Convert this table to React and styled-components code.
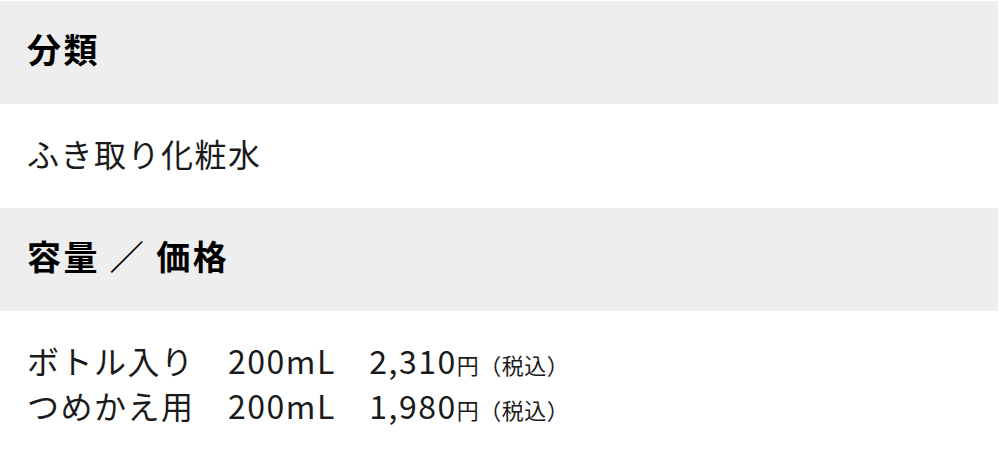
import React from "react";
import styled, { createGlobalStyle } from "styled-components";

const GlobalStyle = createGlobalStyle`
  html, body { margin: 0; padding: 0; background: #ffffff; }
  body {
    font-family: "Noto Sans CJK JP", "Noto Sans", sans-serif;
    color: #1a1a1a;
  }
`;

const Spec = styled.dl`
  margin: 0;
  padding: 1px 0 0 0;
  width: 998px;
`;

const Term = styled.dt`
  display: flex;
  align-items: center;
  height: 103px;
  padding: 0 27px 9px;
  box-sizing: border-box;
  background: #eeeeee;
  font-size: 34px;
  font-weight: 700;
  letter-spacing: 0.07em;
  color: #000000;
  white-space: pre;
`;

const Detail = styled.dd`
  margin: 0;
  padding: ${(p) => (p.$stacked ? "29px 27px 40px" : "0 27px 6px")};
  min-height: ${(p) => (p.$stacked ? "auto" : "104px")};
  box-sizing: border-box;
  display: flex;
  flex-direction: column;
  justify-content: center;
  font-size: 32px;
  font-weight: 400;
  letter-spacing: 1.5px;
  line-height: 41px;
  color: #1a1a1a;
`;

const Line = styled.div`
  white-space: pre;
`;

const Unit = styled.span`
  font-size: 22px;
  letter-spacing: 0.5px;
`;

const prices = [
  { name: "ボトル入り", volume: "200mL", price: "2,310" },
  { name: "つめかえ用", volume: "200mL", price: "1,980" },
];

export default function App() {
  return (
    <>
      <GlobalStyle />
      <Spec>
        <Term>分類</Term>
        <Detail>ふき取り化粧水</Detail>
        <Term>容量 ／ 価格</Term>
        <Detail $stacked>
          {prices.map((p) => (
            <Line key={p.name}>
              {p.name}　{p.volume}　{p.price}
              <Unit>円（税込）</Unit>
            </Line>
          ))}
        </Detail>
      </Spec>
    </>
  );
}
